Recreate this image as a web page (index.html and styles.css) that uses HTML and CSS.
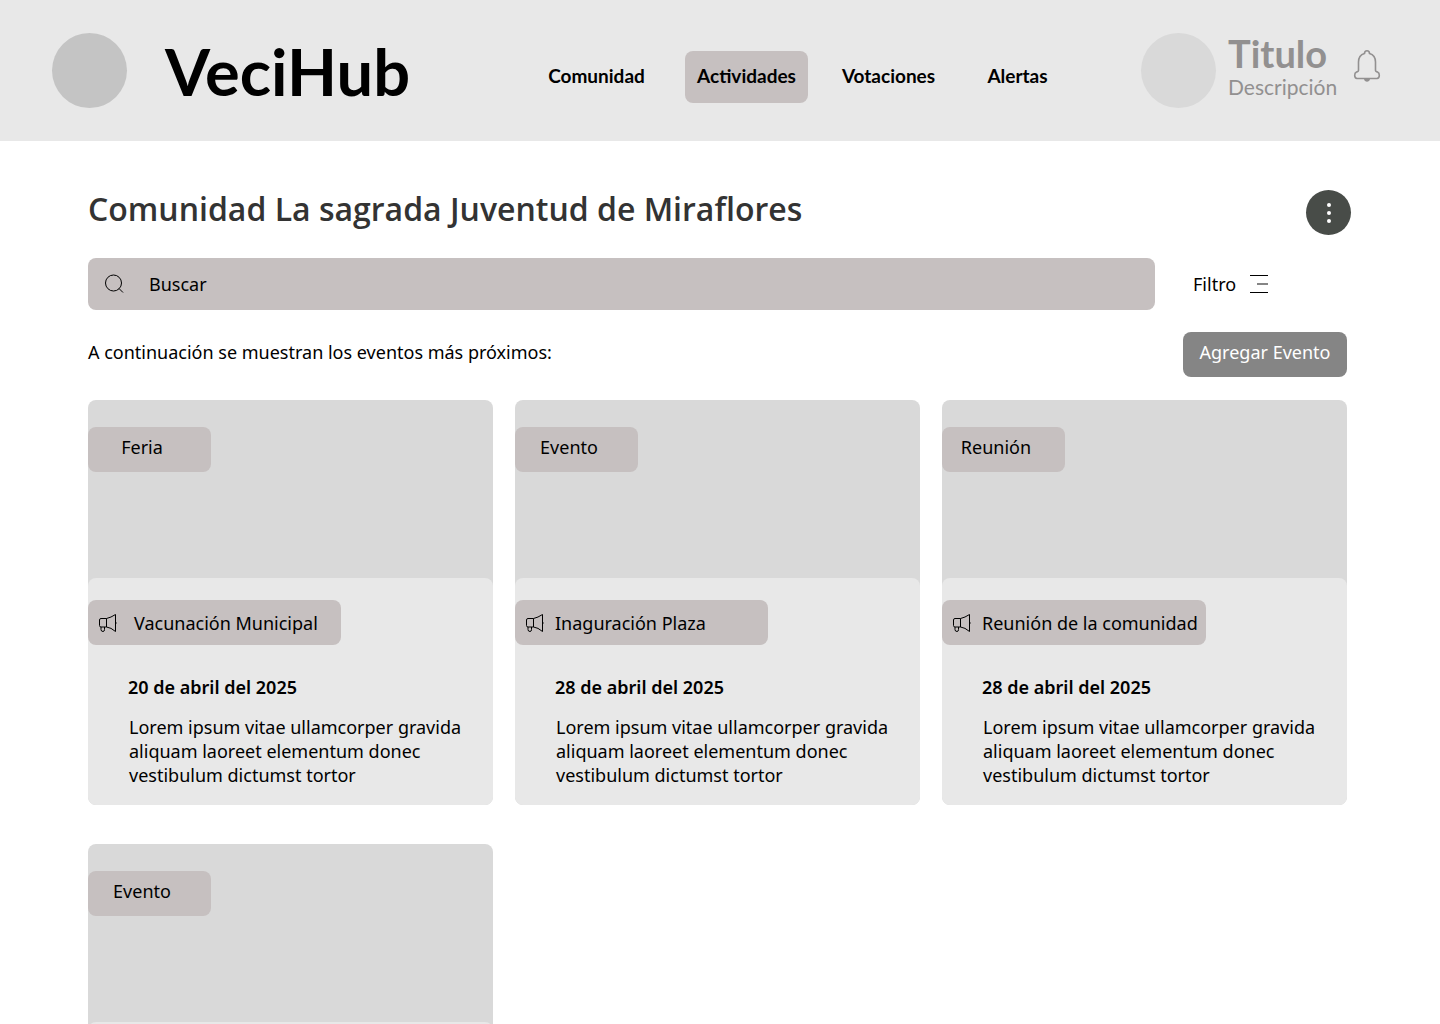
FILE: index.html
```html
<!DOCTYPE html>
<html lang="es">
<head>
  <meta charset="utf-8">
  <meta name="viewport" content="width=device-width, initial-scale=1">
  <title>VeciHub - Actividades</title>
  <link rel="stylesheet" href="styles.css">
</head>
<body>
  <svg class="sprite" aria-hidden="true">
    <symbol id="megaphone" viewBox="0 0 20 20">
      <path d="M8.500 5.500H3Q1.500 5.500 1.500 7V12.500Q1.500 14 3 14H8.500M8.500 5.500V14M8.500 5.500Q13 4.500 17.500 1.500V18.500Q13 14.500 8.500 14M3 14V16.500Q3 18.500 5 18.500Q6.500 18.500 6.500 16.500V14M17.500 9Q19 10 17.500 11" fill="none" stroke="currentColor" stroke-linejoin="round"/>
    </symbol>
  </svg>

  <header class="header">
    <a class="brand" href="#">
      <span class="avatar avatar--logo"></span>
      <span class="brand__name">VeciHub</span>
    </a>
    <nav class="nav">
      <a class="nav__link" href="#">Comunidad</a>
      <a class="nav__link nav__link--active" href="#" aria-current="page">Actividades</a>
      <a class="nav__link" href="#">Votaciones</a>
      <a class="nav__link" href="#">Alertas</a>
    </nav>
    <div class="user">
      <span class="avatar"></span>
      <div class="user__text">
        <span class="user__title">Titulo</span>
        <span class="user__desc">Descripción</span>
      </div>
      <button class="bell" type="button" aria-label="Notificaciones">
        <svg width="28" height="34" viewBox="0 0 28 34" fill="none" stroke="currentColor" stroke-width="1.600">
          <path d="M11.500 4.500C11.500 .800 16.500 .800 16.500 4.500C20.500 5.700 22.500 9 22.500 13V21.500C22.500 22.700 23.500 22.700 24.500 23C27 24 27 29 24 29.500H4C1 29 1 24 3.500 23C4.500 22.700 5.500 22.700 5.500 21.500V13C5.500 9 7.500 5.700 11.500 4.500Z"/>
          <path d="M11 30C11.500 33.500 16.500 33.500 17 30Z" fill="currentColor" stroke="none"/>
        </svg>
      </button>
    </div>
  </header>

  <main class="main">
    <div class="heading">
      <h1 class="heading__title">Comunidad La sagrada Juventud de Miraflores</h1>
      <button class="more" type="button" aria-label="Más opciones">
        <svg width="45" height="45" viewBox="0 0 45 45" fill="currentColor">
          <circle cx="23" cy="15" r="2"/><circle cx="23" cy="23" r="2"/><circle cx="23" cy="31" r="2"/>
        </svg>
      </button>
    </div>

    <form class="toolbar">
      <label class="search">
        <svg width="20" height="20" viewBox="0 0 20 20" fill="none" stroke="currentColor">
          <circle cx="8.500" cy="9" r="8"/><path d="M14 14.500L18 18.500"/>
        </svg>
        <input class="search__input" type="text" placeholder="Buscar" aria-label="Buscar">
      </label>
      <button class="filter" type="button">
        Filtro
        <svg width="18" height="18" viewBox="0 0 18 18" stroke="currentColor">
          <path d="M0 .5H18M0 17.500H18"/><path d="M7 9H18" stroke="#858585" stroke-width="2"/>
        </svg>
      </button>
    </form>

    <div class="intro">
      <p class="intro__text">A continuación se muestran los eventos más próximos:</p>
      <button class="add" type="button">Agregar Evento</button>
    </div>

    <section class="cards">
      <article class="card">
        <div class="card__image"><span class="tag">Feria</span></div>
        <div class="card__body">
          <h2 class="chip chip--spaced"><svg class="chip__icon"><use href="#megaphone"/></svg>Vacunación Municipal</h2>
          <time class="card__date" datetime="2025-04-20">20 de abril del 2025</time>
          <p class="card__text">Lorem ipsum vitae ullamcorper gravida aliquam laoreet elementum donec vestibulum dictumst tortor</p>
        </div>
      </article>
      <article class="card">
        <div class="card__image"><span class="tag">Evento</span></div>
        <div class="card__body">
          <h2 class="chip"><svg class="chip__icon"><use href="#megaphone"/></svg>Inaguración Plaza</h2>
          <time class="card__date" datetime="2025-04-28">28 de abril del 2025</time>
          <p class="card__text">Lorem ipsum vitae ullamcorper gravida aliquam laoreet elementum donec vestibulum dictumst tortor</p>
        </div>
      </article>
      <article class="card">
        <div class="card__image"><span class="tag">Reunión</span></div>
        <div class="card__body">
          <h2 class="chip"><svg class="chip__icon"><use href="#megaphone"/></svg>Reunión de la comunidad</h2>
          <time class="card__date" datetime="2025-04-28">28 de abril del 2025</time>
          <p class="card__text">Lorem ipsum vitae ullamcorper gravida aliquam laoreet elementum donec vestibulum dictumst tortor</p>
        </div>
      </article>
      <article class="card">
        <div class="card__image"><span class="tag">Evento</span></div>
        <div class="card__body"></div>
      </article>
    </section>
  </main>
</body>
</html>
```
FILE: styles.css
```css
* {
  box-sizing: border-box;
}

html {
  scrollbar-width: none;
}

body {
  margin: 0;
  background: #fff;
  color: #000;
  font: 18px/24px "Noto Sans", sans-serif;
}

h1, h2, p {
  margin: 0;
}

a {
  color: inherit;
  text-decoration: none;
}

button {
  border: 0;
  padding: 0;
  background: none;
  color: inherit;
  font: inherit;
  cursor: pointer;
}

svg {
  display: block;
  flex: none;
}

.sprite {
  display: none;
}

/* Header */
.header {
  display: grid;
  grid-template-columns: 484px 1fr auto;
  align-items: center;
  min-height: 141px;
  padding: 0 59px 0 52px;
  background: #e8e8e8;
}

.brand {
  display: flex;
  align-items: center;
  gap: 38px;
}

.brand__name {
  font: 700 65px/80px Lato, sans-serif;
}

.avatar {
  flex: none;
  width: 75px;
  height: 75px;
  border-radius: 50%;
  background: #d9d9d9;
}

.avatar--logo {
  background: #c4c4c4;
}

.nav {
  display: grid;
  grid-template-columns: 121px 123px 105px 97px;
  gap: 28px;
  padding-top: 12px;
  font: 700 19px/50px Lato, sans-serif;
  text-align: center;
}

.nav__link {
  height: 52px;
  border-radius: 8px;
}

.nav__link--active {
  background: #c6c0c0;
}

.user {
  display: flex;
  align-items: center;
  color: #929090;
}

.user__text {
  display: flex;
  flex-direction: column;
  width: 137px;
  padding: 0 0 8px 12px;
}

.user__title {
  font: 700 38px/40px Lato, sans-serif;
}

.user__desc {
  font: 21px/28px Lato, sans-serif;
}

.bell {
  padding-bottom: 10px;
}

/* Page */
.main {
  padding: 49px 93px 0 88px;
}

.heading {
  display: flex;
  justify-content: space-between;
  margin-right: -4px;
}

.heading__title {
  color: #333;
  font: 600 32px/38px "Open Sans", sans-serif;
}

.more {
  border-radius: 50%;
  background: #484c48;
  color: #fff;
}

.toolbar {
  display: flex;
  margin-top: 23px;
}

.search {
  display: flex;
  flex: 1;
  align-items: center;
  gap: 24px;
  height: 52px;
  padding: 0 17px;
  border-radius: 8px;
  background: #c6c0c0;
}

.search__input {
  flex: 1;
  border: 0;
  padding: 0;
  outline: 0;
  background: none;
  color: inherit;
  font: inherit;
}

.search__input::placeholder {
  color: inherit;
  opacity: 1;
}

.filter {
  display: flex;
  align-items: center;
  gap: 14px;
  width: 192px;
  padding-left: 38px;
}

.intro {
  display: flex;
  justify-content: space-between;
  margin-top: 22px;
}

.intro__text {
  padding-top: 8px;
}

.add {
  width: 164px;
  height: 45px;
  padding-bottom: 5px;
  border-radius: 8px;
  background: #858585;
  color: #fff;
}

/* Event cards */
.cards {
  display: grid;
  grid-template-columns: repeat(3, 1fr);
  gap: 39px 22px;
  margin-top: 23px;
}

.card {
  border-radius: 8px;
  background: #d9d9d9;
}

.card__image {
  height: 178px;
  padding-top: 27px;
}

.tag {
  display: block;
  width: 123px;
  height: 45px;
  padding: 8px 15px 0 0;
  border-radius: 8px;
  background: #c6c0c0;
  text-align: center;
}

.card__body {
  display: flex;
  flex-direction: column;
  align-items: flex-start;
  min-height: 227px;
  padding: 22px 0 18px;
  border-radius: 8px;
  background: #e8e8e8;
}

.chip {
  display: flex;
  align-items: center;
  gap: 10px;
  min-width: 253px;
  height: 45px;
  padding: 0 8px 0 10px;
  border-radius: 8px;
  background: #c6c0c0;
  font: inherit;
}

.chip--spaced {
  gap: 16px;
}

.chip__icon {
  width: 20px;
  height: 20px;
}

.card__date {
  margin-top: 30px;
  padding-left: 40px;
  font-weight: 600;
}

.card__text {
  margin-top: 16px;
  padding: 0 20px 0 41px;
}
```
